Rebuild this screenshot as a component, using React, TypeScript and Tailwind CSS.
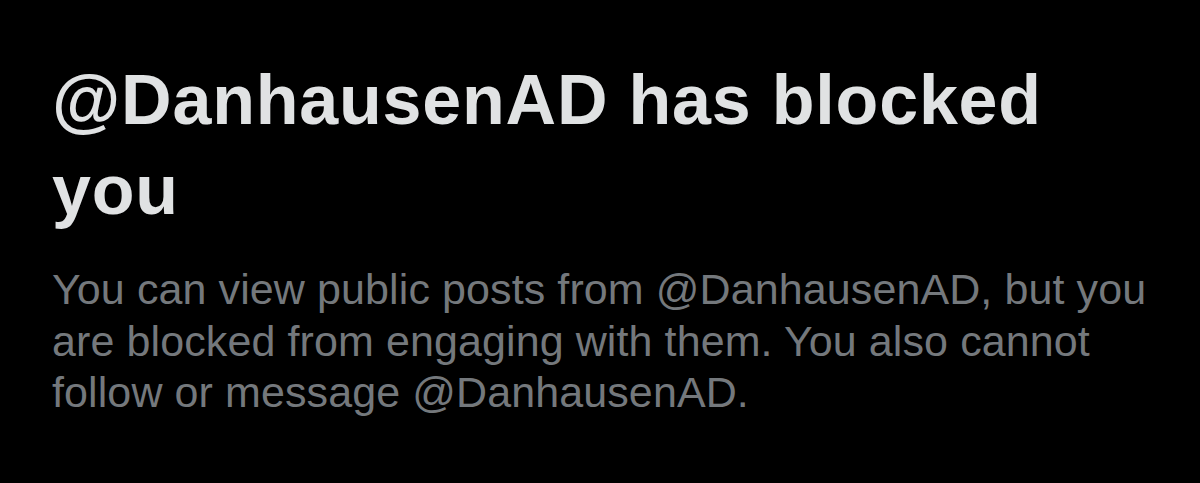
import React from 'react';

const App: React.FC = () => {
  return (
    <div className="min-h-screen w-full bg-black" style={{ fontFamily: '"Liberation Sans", Arial, sans-serif' }}>
      <div className="pl-[52px] pr-[40px] pt-[55px]">
        {/* Heading */}
        <h1 className="text-[70px] leading-[90px] font-bold tracking-[0.8px] text-[#e0e2e3]">
          @DanhausenAD has blocked you
        </h1>

        {/* Description */}
        <p className="mt-[29px] text-[43px] leading-[51.5px] tracking-[0.1px] text-[#74787c]">
          You can view public posts from @DanhausenAD, but you are blocked from engaging with them. You also cannot
          follow or message @DanhausenAD.
        </p>
      </div>
    </div>
  );
};

export default App;
